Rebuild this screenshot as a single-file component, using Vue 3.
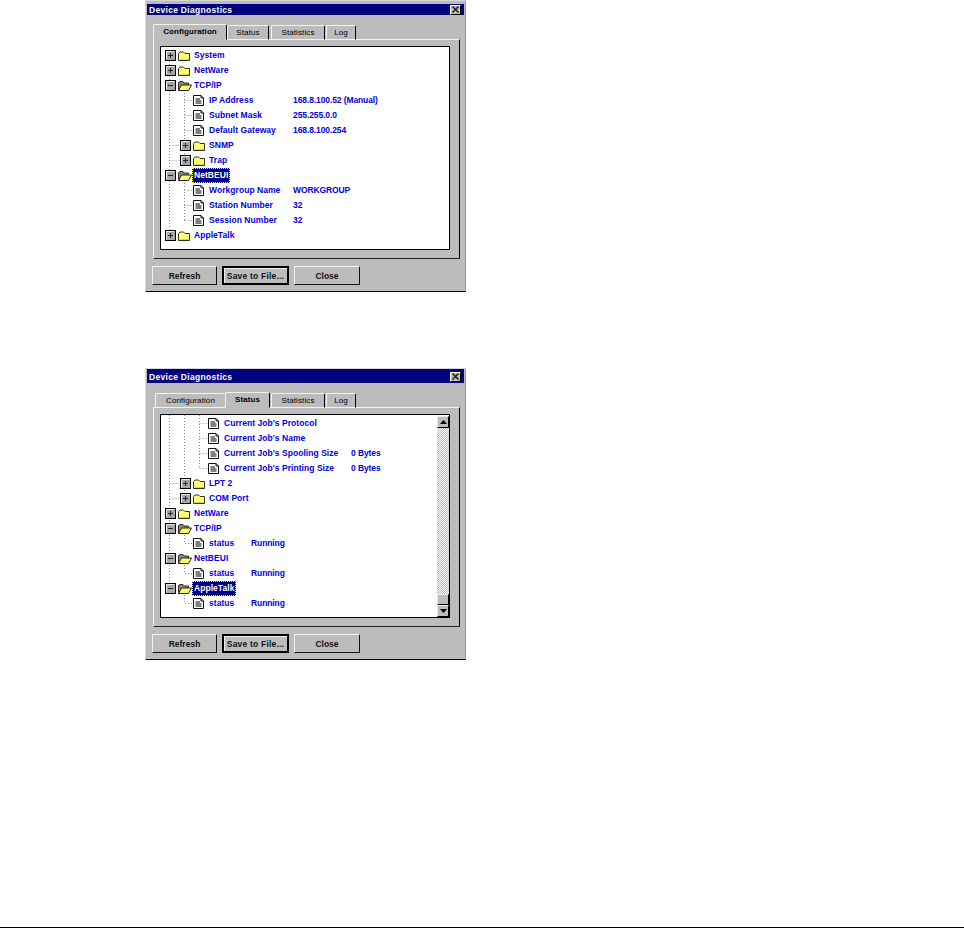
<script setup>
const d = (label, value, lvl = 1, col = 86, selected = false) => ({ kind: 'doc', label, value, lvl, col, selected })
const f = (kind, label, lvl = 0, selected = false) => ({ kind, label, lvl, selected })

const windows = [
  {
    active: 'Configuration',
    scroll: false,
    rows: [
      f('closed', 'System'),
      f('closed', 'NetWare'),
      f('open', 'TCP/IP'),
      d('IP Address', '168.8.100.52 (Manual)'),
      d('Subnet Mask', '255.255.0.0'),
      d('Default Gateway', '168.8.100.254'),
      f('closed', 'SNMP', 1),
      f('closed', 'Trap', 1),
      f('open', 'NetBEUI', 0, true),
      d('Workgroup Name', 'WORKGROUP'),
      d('Station Number', '32'),
      d('Session Number', '32'),
      f('closed', 'AppleTalk')
    ],
    lines: [
      'M8.5 14V188.5', 'M23.5 46V113.5', 'M23.5 136V173.5',
      'M23.5 53.5H31', 'M23.5 68.5H31', 'M23.5 83.5H31', 'M8.5 98.5H18', 'M8.5 113.5H18',
      'M23.5 143.5H31', 'M23.5 158.5H31', 'M23.5 173.5H31'
    ]
  },
  {
    active: 'Status',
    scroll: true,
    rows: [
      d("Current Job's Protocol", '', 2, 129),
      d("Current Job's Name", '', 2, 129),
      d("Current Job's Spooling Size", '0 Bytes', 2, 129),
      d("Current Job's Printing Size", '0 Bytes', 2, 129),
      f('closed', 'LPT 2', 1),
      f('closed', 'COM Port', 1),
      f('closed', 'NetWare'),
      f('open', 'TCP/IP'),
      d('status', 'Running', 1, 44),
      f('open', 'NetBEUI'),
      d('status', 'Running', 1, 44),
      f('open', 'AppleTalk', 0, true),
      d('status', 'Running', 1, 44)
    ],
    lines: [
      'M8.5 0V174', 'M23.5 0V84',
      'M38.5 0V53.5', 'M38.5 8.5H46', 'M38.5 23.5H46', 'M38.5 38.5H46', 'M38.5 53.5H46',
      'M8.5 68.5H18', 'M8.5 83.5H18',
      'M23.5 120V128.5H31', 'M23.5 150V158.5H31', 'M23.5 180V188.5H31'
    ]
  }
]
const tabs = [
  { name: 'Configuration', w: 71, gap: 1 },
  { name: 'Status', w: 42, gap: 2 },
  { name: 'Statistics', w: 54, gap: 1 },
  { name: 'Log', w: 30, gap: 0 }
]
const tabStyle = (t, win) => {
  const on = t.name === win.active
  return { width: t.w + (on ? 3 : 0) + 'px', marginRight: t.gap - (on ? 1 : 0) + 'px' }
}
</script>

<template>
  <div class="page">
    <section v-for="(win, wi) in windows" :key="wi" class="window" :class="'w' + wi">
      <header class="title">
        <span>Device Diagnostics</span>
        <button class="close" aria-label="Close">
          <svg width="7" height="7" viewBox="0 0 7 7"><path d="M.5 .5L6.500 6.500M6.500 .5L.5 6.500" stroke="#111" stroke-width="1.300"/></svg>
        </button>
      </header>

      <nav class="tabs">
        <div
          v-for="t in tabs"
          :key="t.name"
          class="tab"
          :class="{ on: t.name === win.active }"
          :style="tabStyle(t, win)"
        >{{ t.name }}</div>
      </nav>

      <div class="panel">
        <div class="tree">
          <svg class="lines" width="100" height="202">
            <path v-for="(l, i) in win.lines" :key="i" :d="l" stroke="#8a8a8a" stroke-dasharray="1 2" fill="none"/>
          </svg>
          <div class="rows">
            <div v-for="(r, i) in win.rows" :key="i" class="row" :class="['l' + r.lvl, 'k-' + r.kind]">
              <span v-if="r.kind !== 'doc'" class="exp">
                <svg width="11" height="11" viewBox="0 0 11 11">
                  <rect x=".5" y=".5" width="10" height="10" fill="#a6a6a6" stroke="#000"/>
                  <path d="M1.500 9.500V1.500H9.500" stroke="#e8e8e8" fill="none"/>
                  <path d="M3 5.500H8" stroke="#222"/>
                  <path v-if="r.kind === 'closed'" d="M5.500 3V8" stroke="#222"/>
                </svg>
              </span>
              <svg v-if="r.kind === 'closed'" class="ico" width="13" height="12" viewBox="0 0 13 12">
                <path d="M.5 10.500V3.500L2 2H5.500L7 3.500H11.500V10.500Z" fill="#ffff70" stroke="#333318"/>
                <path d="M2 9.500H11" stroke="#dcd24a"/>
              </svg>
              <svg v-else-if="r.kind === 'open'" class="ico" width="14" height="12" viewBox="0 0 14 12">
                <path d="M.5 10.500V2.500L2 1.500H5L6 3H10.500V5" fill="#8a8a6a" stroke="#333"/>
                <path d="M.5 10.500L3.500 5H13.500L10.500 10.500Z" fill="#ffff66" stroke="#222"/>
              </svg>
              <svg v-else class="file" width="11" height="11" viewBox="0 0 11 11">
                <path d="M.5 .5H8L10.500 3V10.500H.5Z" fill="#fff" stroke="#111"/>
                <path d="M8 .5V3H10.500" fill="none" stroke="#111"/>
                <path d="M2.500 4H7M2.500 6H8.500M2.500 8H8.500" stroke="#000"/>
              </svg>
              <span class="cell" :style="r.col ? { width: r.col + 'px' } : null">
                <span class="label" :class="{ sel: r.selected }">{{ r.label }}</span>
              </span>
              <span v-if="r.value" class="value">{{ r.value }}</span>
            </div>
          </div>
          <aside v-if="win.scroll" class="scroll">
            <div class="sb">
              <svg width="7" height="4" viewBox="0 0 7 4"><path d="M3.500 0L7 4H0Z"/></svg>
            </div>
            <div class="track"></div>
            <div class="sb thumb"></div>
            <div class="sb">
              <svg width="7" height="4" viewBox="0 0 7 4"><path d="M0 0H7L3.500 4Z"/></svg>
            </div>
          </aside>
        </div>
      </div>

      <footer class="buttons">
        <button class="btn b1">Refresh</button>
        <button class="btn b2 def">Save to File...</button>
        <button class="btn b3">Close</button>
      </footer>
    </section>
    <div class="rule"></div>
  </div>
</template>

<style>
html, body { margin: 0; background: #fff; }
</style>

<style scoped>
.page {
  height: 928px;
  display: flex;
  flex-direction: column;
  padding-left: 145px;
  box-sizing: border-box;
  font-family: "Liberation Sans", Arial, sans-serif;
  font-size: 8px;
  overflow: hidden;
}
.window {
  width: 321px;
  height: 292px;
  flex: none;
  box-sizing: border-box;
  background: #bcbcbc;
  border-left: 1px solid #d8d8d8;
  border-top: 1px solid #d8d8d8;
  border-right: 1px solid #9a9a9a;
  border-bottom: 1px solid #000;
  padding-left: 1px;
  display: flex;
  flex-direction: column;
}
.w1 { margin-top: 76px; }
.title {
  height: 14px;
  flex: none;
  box-sizing: border-box;
  margin-right: 1px;
  background: #000080;
  color: #fff;
  display: flex;
  align-items: center;
  justify-content: space-between;
  padding: 1px 3px 0 2px;
  font-weight: bold;
  font-size: 8.500px;
  letter-spacing: .3px;
}
.w0 .title { height: 11px; margin-top: 3px; padding-top: 0; }
.close {
  width: 11px;
  height: 10px;
  padding: 0;
  background: #bcbcbc;
  border: 1px solid;
  border-color: #fff #000 #000 #fff;
  display: flex;
  align-items: center;
  justify-content: center;
}
.tabs {
  display: flex;
  align-items: flex-end;
  height: 25px;
  flex: none;
  padding-left: 8px;
  position: relative;
  z-index: 1;
  margin-bottom: -1px;
}
.tab {
  height: 15px;
  box-sizing: border-box;
  text-align: center;
  line-height: 13px;
  color: #000;
  background: #bcbcbc;
  border: 1px solid;
  border-color: #f2f2f2 #000 #f2f2f2 #f2f2f2;
  border-radius: 2px 2px 0 0;
  white-space: nowrap;
  letter-spacing: .1px;
}
.tab.on {
  height: 16px;
  margin-left: -2px;
  position: relative;
  font-weight: bold;
  border-bottom-color: #bcbcbc;
  line-height: 14px;
}
.panel {
  margin-left: 6px;
  width: 307px;
  height: 220px;
  flex: none;
  box-sizing: border-box;
  border: 1px solid;
  border-color: #f2f2f2 #000 #222 #f2f2f2;
  padding: 6px 0 0 6px;
}
.tree {
  width: 290px;
  height: 204px;
  box-sizing: border-box;
  background: #fff;
  border: 1px solid #000;
  position: relative;
  overflow: hidden;
}
.lines { position: absolute; left: 0; top: 0; }
.rows { position: relative; padding-top: 1px; }
.row {
  height: 15px;
  display: flex;
  align-items: center;
  color: #0000e0;
  font-weight: bold;
  font-size: 8.500px;
  line-height: 15px;
  white-space: nowrap;
}
.row.l0 { padding-left: 4px; }
.row.l1 { padding-left: 19px; }
.row.l1.k-doc { padding-left: 32px; }
.row.l2.k-doc { padding-left: 47px; }
.exp { display: flex; width: 13px; flex: none; }
.ico { flex: none; margin-right: 1px; }
.row.k-open .ico { margin-right: 0; }
.file { flex: none; margin-right: 3px; }
.cell { display: block; flex: none; }
.label { display: block; width: max-content; padding: 0 2px; letter-spacing: .05px; }
.value { letter-spacing: -.1px; }
.label.sel {
  background: #000080;
  color: #fff;
  outline: 1px dotted #ffff00;
  outline-offset: -1px;
}
.scroll {
  position: absolute;
  right: 0;
  top: 0;
  bottom: 0;
  width: 12px;
  display: flex;
  flex-direction: column;
  padding-top: 1px;
  box-sizing: border-box;
}
.sb {
  height: 12px;
  flex: none;
  box-sizing: border-box;
  background: #bcbcbc;
  border: 1px solid;
  border-color: #eee #000 #000 #eee;
  display: flex;
  align-items: center;
  justify-content: center;
}
.thumb { height: 11px; }
.track {
  flex: 1;
  background: repeating-conic-gradient(#fff 0 25%, #bcbcbc 0 50%) 0 0 / 2px 2px;
}
.buttons {
  display: flex;
  gap: 5px;
  padding: 7px 0 0 5px;
}
.btn {
  height: 19px;
  padding: 0;
  box-sizing: border-box;
  background: #bcbcbc;
  color: #111;
  font-family: inherit;
  font-weight: bold;
  font-size: 8.500px;
  border: 1px solid;
  border-color: #f2f2f2 #111 #111 #f2f2f2;
}
.b1 { width: 65px; }
.b2 { width: 67px; }
.b3 { width: 66px; }
.def {
  border: 2px solid #000;
  box-shadow: inset 1px 1px 0 #f2f2f2;
  letter-spacing: .2px;
}
.rule {
  margin-top: auto;
  margin-left: -145px;
  height: 1px;
  background: #000;
  flex: none;
}
</style>
